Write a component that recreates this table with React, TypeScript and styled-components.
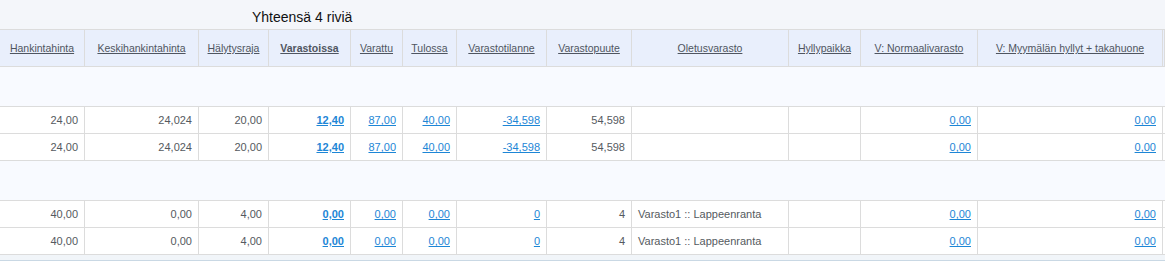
import { FC } from "react";
import styled, { createGlobalStyle } from "styled-components";

const COLUMNS = "85px 114px 70px 82px 52px 54px 90px 85px 157px 72px 117px 185px 1fr";

type Cell = {
  text: string;
  link?: boolean;
  bold?: boolean;
  left?: boolean;
};

const headers: { label: string; bold?: boolean }[] = [
  { label: "Hankintahinta" },
  { label: "Keskihankintahinta" },
  { label: "Hälytysraja" },
  { label: "Varastoissa", bold: true },
  { label: "Varattu" },
  { label: "Tulossa" },
  { label: "Varastotilanne" },
  { label: "Varastopuute" },
  { label: "Oletusvarasto" },
  { label: "Hyllypaikka" },
  { label: "V: Normaalivarasto" },
  { label: "V: Myymälän hyllyt + takahuone" },
  { label: "" },
];

const firstRow: Cell[] = [
  { text: "24,00" },
  { text: "24,024" },
  { text: "20,00" },
  { text: "12,40", link: true, bold: true },
  { text: "87,00", link: true },
  { text: "40,00", link: true },
  { text: "-34,598", link: true },
  { text: "54,598" },
  { text: "", left: true },
  { text: "" },
  { text: "0,00", link: true },
  { text: "0,00", link: true },
  { text: "" },
];

const secondRow: Cell[] = [
  { text: "40,00" },
  { text: "0,00" },
  { text: "4,00" },
  { text: "0,00", link: true, bold: true },
  { text: "0,00", link: true },
  { text: "0,00", link: true },
  { text: "0", link: true },
  { text: "4" },
  { text: "Varasto1 :: Lappeenranta", left: true },
  { text: "" },
  { text: "0,00", link: true },
  { text: "0,00", link: true },
  { text: "" },
];

const groups: Cell[][][] = [
  [firstRow, firstRow],
  [secondRow, secondRow],
];

const DataRow: FC<{ cells: Cell[] }> = ({ cells }) => (
  <StRow>
    {cells.map((c, i) => (
      <StCell key={i} $left={c.left}>
        {c.link ? <StLink $bold={c.bold}>{c.text}</StLink> : c.text}
      </StCell>
    ))}
  </StRow>
);

export default function App() {
  return (
    <>
      <GlobalStyle />
      <StRoot>
        <StTitle>Yhteensä 4 riviä</StTitle>
        <StTable>
          <StHeadRow>
            {headers.map((h, i) => (
              <StHeadCell key={i}>
                {h.label && <StHeadLabel $bold={h.bold}>{h.label}</StHeadLabel>}
              </StHeadCell>
            ))}
          </StHeadRow>
          {groups.map((rows, g) => (
            <div key={g}>
              <StGroupRow />
              {rows.map((r, i) => (
                <DataRow key={i} cells={r} />
              ))}
            </div>
          ))}
          <StFooter />
        </StTable>
      </StRoot>
    </>
  );
}

const GlobalStyle = createGlobalStyle`
  html, body {
    margin: 0;
    padding: 0;
    background: #ffffff;
  }
  body {
    font-family: "Liberation Sans", Arial, sans-serif;
  }
`;

const StRoot = styled.div`
  width: 1165px;
  overflow: hidden;
  background: #ffffff;
`;

const StTitle = styled.div`
  height: 29px;
  box-sizing: border-box;
  padding: 9px 0 0 252px;
  background: #f4f6fa;
  font-size: 14px;
  line-height: 16px;
  color: #111111;
`;

const StTable = styled.div`
  border-top: 1px solid #dcdcdc;
`;

const StHeadRow = styled.div`
  display: grid;
  grid-template-columns: ${COLUMNS};
  height: 36px;
  background: #e9effc;
  border-bottom: 1px solid #dcdcdc;
`;

const StHeadCell = styled.div`
  display: flex;
  align-items: center;
  justify-content: center;
  border-right: 1px solid #dcdcdc;
  font-size: 10.5px;
`;

const StHeadLabel = styled.span<{ $bold?: boolean }>`
  color: #4f5560;
  text-decoration: underline;
  font-weight: ${(p) => (p.$bold ? 700 : 400)};
  white-space: nowrap;
`;

const StGroupRow = styled.div`
  height: 39px;
  background: #f8faff;
  border-bottom: 1px solid #dcdcdc;
`;

const StRow = styled.div`
  display: grid;
  grid-template-columns: ${COLUMNS};
  height: 26px;
  background: #ffffff;
  border-bottom: 1px solid #dcdcdc;
`;

const StCell = styled.div<{ $left?: boolean }>`
  display: flex;
  align-items: center;
  justify-content: ${(p) => (p.$left ? "flex-start" : "flex-end")};
  padding: 0 6px;
  border-right: 1px solid #dcdcdc;
  font-size: 11px;
  color: #555a60;
  white-space: nowrap;
  overflow: hidden;
`;

const StLink = styled.a<{ $bold?: boolean }>`
  color: #1d86d6;
  text-decoration: underline;
  font-weight: ${(p) => (p.$bold ? 700 : 400)};
  cursor: pointer;
`;

const StFooter = styled.div`
  height: 5px;
  background: #f1f5f9;
  border-bottom: 1px solid #c9d8e4;
`;
